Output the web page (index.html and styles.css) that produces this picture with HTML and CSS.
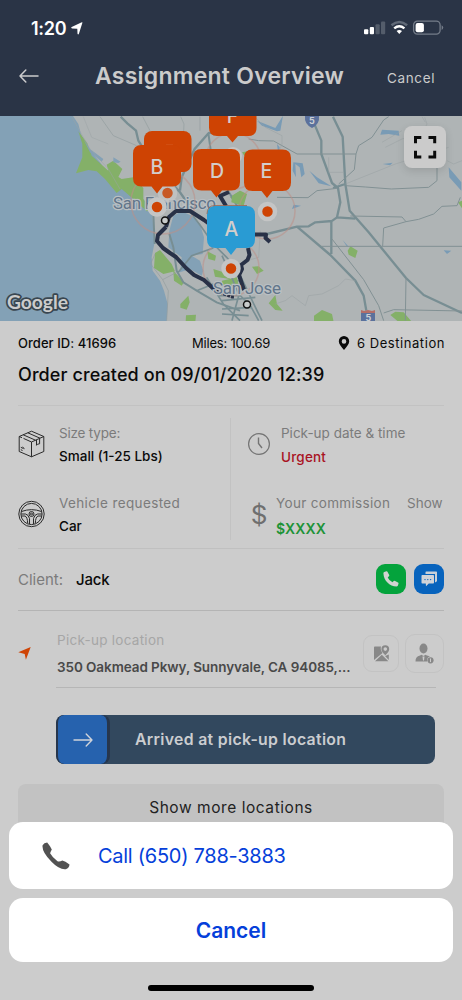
FILE: index.html
```html
<!DOCTYPE html>
<html lang="en">
<head>
<meta charset="utf-8">
<meta name="viewport" content="width=device-width, initial-scale=1">
<title>Assignment Overview</title>
<link rel="stylesheet" href="styles.css">
</head>
<body>
<div class="screen">
  <header class="header">
    <div class="status">
      <div class="clock-time"><span class="time">1:20</span>
        <svg width="12" height="13" viewBox="0 0 12 13"><path d="M11.400.8 7.900 11.800Q7.200 13 6.500 11.800L6.300 6.700 1 6.400Q-.4 5.900.7 5.100L10.200.400Q11.700-.1 11.400.8Z" fill="#fff"/></svg>
      </div>
      <svg class="signals" width="80" height="16" viewBox="0 0 80 16">
        <rect x="0" y="9.300" width="4.300" height="5" rx="1" fill="#fff"/><rect x="5.800" y="7" width="4.200" height="7.300" rx="1" fill="#fff"/>
        <rect x="11.500" y="4.300" width="4.200" height="10" rx="1" fill="#545d6b"/><rect x="17" y="1.500" width="4.200" height="12.800" rx="1" fill="#545d6b"/>
        <path d="M27.500 5.300Q35.300-1.400 43.100 5.300" fill="none" stroke="#616a78" stroke-width="2.500"/>
        <path d="M30.200 8.300Q35.300 4 40.400 8.300" fill="none" stroke="#fff" stroke-width="2.400"/>
        <path d="M32.600 11Q35.300 8.800 38 11L35.300 14Z" fill="#fff"/>
        <rect x="49.600" y="1.100" width="26.500" height="13" rx="3.800" fill="none" stroke="#747c89" stroke-width="1.300"/>
        <rect x="51.600" y="3" width="8.300" height="9.200" rx="2" fill="#fff"/><path d="M77.600 5.300q1.600.6 1.600 2.300t-1.600 2.300z" fill="#747c89"/>
      </svg>
    </div>
    <div class="nav">
      <svg width="20" height="14" viewBox="0 0 20 14" fill="none" stroke="#cbcbcd" stroke-width="1.500" stroke-linecap="round" stroke-linejoin="round"><path d="M19 7H1M6.800 1 1 7l5.800 6"/></svg>
      <h1 class="title">Assignment Overview</h1>
      <span class="nav-cancel">Cancel</span>
    </div>
  </header>

  <div class="map">
    <svg width="462" height="205" viewBox="0 116 462 205">
      <rect y="116" width="462" height="205" fill="#afb4b5"/>
      <g transform="translate(0 114) scale(.33333)">
        <path d="M0 0H215L235 30 243 60 265 105 300 145 330 190 380 225 420 250 450 285 457 300 463 390 455 430 458 470 480 500 492 530 503 570 500 625H0Z" fill="#83a1b6"/>
        <path d="M520 305 545 292 575 305 600 330 612 370 608 420 575 425 540 475 545 430 505 400 508 350Z M540 475 575 425 600 440 610 470 605 485 570 465Z" fill="#83a1b6"/>
        <path d="M235 52 262 88 275 125 325 170 365 195 400 190 430 222 430 255 455 285 440 292 400 255 365 225 350 237 315 195 290 172 265 168 228 178 247 130 247 90Z M320 152 340 140 367 165 355 189 325 170Z M465 417 480 408 515 450 525 472 490 480 462 462Z M520 470 552 505 545 515 522 500Z M541 570 565 545 569 565 560 587 541 581Z M558 604 588 602 586 624H557Z M622 412 648 425 645 440 625 435Z M640 465 680 478 690 495 645 488Z M690 250 720 230V275Z" fill="#84b068"/>
        <path d="M250 75 270 105 310 135 305 143 270 115ZM340 130 362 143 355 147 340 145Z" fill="#83a1b6"/>
        <g fill="none" stroke="#788e93" stroke-width="5">
          <path d="M362 8 382 28 408 50 415 80 440 120 480 170 540 235 575 285" stroke-width="7"/>
          <path d="M720 45 626 57 584 105 545 190 540 230" stroke-width="7"/>
          <path d="M625 57 635 130 660 190 720 290M460 300 464 390M508 360 520 400 530 470 550 505 590 530 650 565 720 590" stroke-width="6"/>
          <path d="M535 475 575 425 640 402M575 300 605 340 640 390 680 430 720 480M620 490 670 570 720 620M655 545H720M590 530 640 510 720 500"/>
          <path d="M300 8 340 65 410 95M428 8 450 50M542 8 552 30 550 75M465 420 452 450 488 497 530 475M488 497 505 530 500 620M600 8V50M640 120 600 190" stroke-width="2" stroke="#939d9f"/>
          <path d="M215 8 270 105 325 165 360 225M250 8 275 70 325 90" stroke-width="1.500" stroke="#9ca4a6"/>
        </g>
      </g>
      <g transform="translate(222 114) scale(.33333)">
        <path d="M105 20 160 42 183 5 175 50 165 52 120 35ZM165 90 173 100 170 130ZM214 145 242 148 248 180 238 190 233 160 220 150 222 190 212 170ZM262 170 285 190 328 217 290 208ZM475 62 480 47 530 50 532 65 500 60ZM680 160 718 205V230L682 190ZM482 150 512 146 504 154ZM210 285 215 272 237 275ZM665 409 688 410 675 420ZM362 378 380 398 374 397Z" fill="#799bb5"/>
        <path d="M30 245 55 230 75 240 65 275 28 265ZM90 458 110 457 125 470 105 480ZM140 568 160 543 165 570 182 590 160 588ZM276 605 300 588 330 600 335 624H276ZM377 410 385 397 407 410 400 432 380 422ZM505 603 520 593 545 595 570 624H530ZM708 265 720 260V283ZM60 115 76 112 70 130ZM0 500 45 490 50 515 0 520Z" fill="#84b068"/>
        <g fill="none" stroke="#788e93" stroke-width="7" stroke-linejoin="round">
          <path d="M268 8 298 80V120L330 207 348 222 355 265 345 310 328 322V420M333 8 362 68 370 210 383 290 440 355 552 492 605 543 720 597M333 222 370 210M345 310 400 314M135 360 225 338 260 337 280 325 330 321M225 338 325 423 400 500 425 545 433 590" />
          <path d="M0 425 25 480 50 540 85 575 110 620M55 485 105 590 120 620M0 560 100 550M0 585 90 580M0 600 80 605M60 510 35 600 30 620" stroke-width="5"/>
          <path d="M80 75 110 80 155 81 225 120H402M402 120 410 95 450 70 485 18 500 8M402 120 397 167 350 210M370 215 430 219 508 225 620 220 645 200V145M165 250 258 251 285 230 345 223M385 306 540 309 552 323 590 316 635 300 660 277 705 275 715 250M552 323 485 342 482 396M298 397H720M330 375 425 497 470 575 485 620M552 492 550 620M485 597 515 587 720 591" stroke-width="3" stroke="#829194"/>
          <path d="M100 10 130 40 180 65V90L165 130M608 10 615 30 600 60 540 75 490 100M370 210 520 150 680 100M540 50 480 85M675 140 695 150 720 140M320 130V175H365M600 8 610 25M115 350 110 430 75 440M160 570 190 560 210 545 250 575 260 545 300 540 350 515 370 495 400 500" stroke-width="1.500" stroke="#989fa1"/>
        </g>
      </g>
      <g class="place"><text x="113" y="209" textLength="103">San Francisco</text></g>
      <g fill="none" stroke="#bd9088" stroke-width="1.500" opacity=".55"><circle cx="163" cy="202" r="32"/><circle cx="267" cy="211" r="28"/><circle cx="231" cy="268" r="28"/><circle cx="233" cy="161" r="28"/></g>
      <path d="M166 227 169 217 176 211 190 211 204 220 216 229 234 240M166 227 158 235 157 241 163 248 170 253 176 257 186 268 194 275 204 280 216 291M229 192 220 196 226 206M255 234.500H266L265.500 238 270 242M248 248 249.500 255 247.500 260 241 265 242 269 239 275 244 290" fill="none" stroke="#283147" stroke-width="4" stroke-linejoin="round"/>
      <path d="M216 291 224 294 232 297H234" stroke="#283147" stroke-width="3" stroke-dasharray="3 1" fill="none"/>
      <g class="place"><text x="213" y="293.500" textLength="68">San Jose</text></g>
      <g stroke="#111" stroke-width="1.500" fill="#c8cbcb"><circle cx="165" cy="220.500" r="3.500"/><circle cx="247" cy="304.500" r="3.500"/></g>
      <g fill="#ce4303" stroke="#c4c5c5" stroke-width="4.500"><circle cx="167.500" cy="193" r="7.500" opacity=".8"/><circle cx="157" cy="207" r="7.500"/><circle cx="267.500" cy="211.500" r="7.500"/><circle cx="231" cy="268.500" r="7.500"/></g>
      <circle cx="233" cy="156" r="9" fill="#c4c5c5"/>
      <path d="M209 116H256.500V127.500Q256.500 136 248.500 136H238L232.500 142.500 227 136H217Q209 136 209 127.500V116Z" fill="#ce4303"/>
      <rect x="144" y="131" width="47.500" height="41" rx="8" fill="#ce4303"/><path d="M166 145.300h7" stroke="#e28a62" stroke-width=".8"/>
      <g fill="#ce4303">
        <path d="M141.500 145H172.500Q181 145 181 153.500V178Q181 186.500 172.500 186.500H162.500L157 193.500 151.500 186.500H141.500Q133 186.500 133 178V153.500Q133 145 141.500 145Z"/>
        <path d="M201.500 149H231.500Q240 149 240 157.500V182Q240 190.500 231.500 190.500H222L216.500 197.500 211 190.500H201.500Q193 190.500 193 182V157.500Q193 149 201.500 149Z"/>
        <path d="M252.500 149.500H282.500Q291 149.500 291 158V182.500Q291 191 282.500 191H272.500L267 198 261.500 191H252.500Q244 191 244 182.500V158Q244 149.500 252.500 149.500Z"/>
      </g>
      <path d="M215.500 206H246.500Q255 206 255 214.500V239.500Q255 248 246.500 248H236.500L231 255 225.500 248H215.500Q207 248 207 239.500V214.500Q207 206 215.500 206Z" fill="#299bd3"/>
      <path d="M207 214Q207 205.500 215 205.500H247" fill="none" stroke="#9a6650" stroke-width=".8"/>
      <g class="pin-label"><text x="232.500" y="122.500">F</text><text x="157" y="174">B</text><text x="217" y="178">D</text><text x="266.500" y="178">E</text><text x="231.500" y="235.500">A</text></g>
      <path d="M305 116Q304 124 312 128Q320 124 319 116Z" fill="#5b719c"/><text x="312" y="123.500" class="shield">5</text>
      <path d="M361 311H375V321H361Z" fill="#5b719c"/><path d="M361 310l3 1 4-1 4 1 3-1v3h-14z" fill="#b46e67"/><text x="368.500" y="321" class="shield">5</text>
      <text x="7" y="308.500" class="google" textLength="61" lengthAdjust="spacingAndGlyphs">Google</text>
    </svg>
    <div class="expand"><svg width="24" height="24" viewBox="0 0 24 24" fill="none" stroke="#0a0a0a" stroke-width="3"><path d="M2.500 8.300V2.500h5.800M15.500 2.500h6.200v5.800M21.700 15.700v6.200h-6.200M8.300 21.900H2.500v-6.200"/></svg></div>
  </div>

  <main class="content">
    <div class="meta"><span class="order-id">Order ID: 41696</span><span class="miles">Miles: 100.69</span>
      <span class="dest"><svg width="12" height="14" viewBox="0 0 12 14"><path fill-rule="evenodd" d="M6 0a5.200 5.200 0 0 1 5.200 5.200C11.200 8 8.500 11 6 14 3.500 11 .8 8 .8 5.200A5.200 5.200 0 0 1 6 0Zm0 3.100a2.300 2.300 0 1 0 0 4.600 2.300 2.300 0 0 0 0-4.600Z" fill="#0a0a0a"/></svg><span class="dest-text">6 Destination</span></span></div>
    <div class="created"><span>Order created on 09/01/2020 12:39</span></div>

    <section class="details">
      <div class="col">
        <div class="item">
          <svg class="ic" width="27" height="28" viewBox="0 0 27 28" fill="none" stroke="#2a2a2a" stroke-width="1" stroke-linejoin="round"><path d="M13.500 1.200 25.800 6.500V21.500L13.500 26.800 1.200 21.500V6.500ZM1.200 6.500 4 7.700M5.500 8.400 13.500 12 25.800 6.500M13.500 12V26.800M9.800 2.800 22 8.200M5.200 4.800 17.500 10.200M18.500 9.800V15.300L19.500 14.200 21.600 13.800V8.500M2.800 17.300 5.500 18.600M2.800 19.700 4.500 20.500M4.500 17 6.500 18.700"/></svg>
          <div class="pair"><span class="label l-size">Size type:</span><span class="value v-size">Small (1-25 Lbs)</span></div>
        </div>
        <div class="item">
          <svg class="ic" width="27" height="28" viewBox="0 0 27 28" fill="none" stroke="#2a2a2a" stroke-width="1"><circle cx="13.500" cy="14" r="12.700"/><circle cx="13.500" cy="14" r="10.600"/><circle cx="13.500" cy="14" r="2.500"/><circle cx="13.500" cy="14" r="1"/><path d="M3.500 11.500Q13.500 7.800 23.500 11.500M3.200 14H7.500Q10.500 14.500 11.500 18.500V24M23.800 14H19.500Q16.500 14.500 15.500 18.500V24M3.600 16H7Q9.500 17 9.700 23.500M23.400 16H20Q17.500 17 17.300 23.500"/></svg>
          <div class="pair"><span class="label l-veh">Vehicle requested</span><span class="value v-car">Car</span></div>
        </div>
      </div>
      <div class="col right">
        <div class="item">
          <svg class="ic" width="24" height="28" viewBox="0 0 24 28" fill="none" stroke="#747474" stroke-width="1.200"><circle cx="12" cy="14" r="10.400"/><path d="M11.500 7.500v6l3.500 4.500" stroke-width="1.400"/></svg>
          <div class="pair p-time"><span class="label l-time">Pick-up date &amp; time</span><span class="value v-urgent">Urgent</span></div>
        </div>
        <div class="item">
          <span class="dollar">$</span>
          <div class="pair p-com"><span class="label l-com">Your commission</span><span class="value v-com">$XXXX</span></div>
          <span class="label show">Show</span>
        </div>
      </div>
    </section>

    <section class="client"><span class="client-label">Client:</span><span class="client-name">Jack</span>
      <span class="btn call"><svg width="16" height="16" viewBox="0 0 16 16"><path d="M1.200.9 3.400.3Q4.200.1 4.600.9L6.200 3.900Q6.500 4.700 5.900 5.300L4.700 6.400Q6.200 9.600 9.500 11.300L10.700 10.100Q11.300 9.500 12.100 9.900L15 11.500Q15.800 12 15.500 12.700L14.800 14.800Q14.400 15.500 13.600 15.500C6.500 15.200.7 9.600.4 2.200Q.4 1.300 1.200.9Z" fill="#d0d3d0"/></svg></span>
      <span class="btn chat"><svg width="17" height="16" viewBox="0 0 17 16"><path d="M5.200.5H15.300Q16 .5 16 1.200V10.200L14 11.400V3H4.500V1.200Q4.500.5 5.200.5Z" fill="#c9d0d8"/><path d="M1.200 4H12.200Q13 4 13 4.800V11.800Q13 12.600 12.200 12.600H7.800L5 15.200 4.800 12.600H1.200Q.5 12.600.5 11.800V4.800Q.5 4 1.200 4Z" fill="#d0d3d8"/><g fill="#0763bd"><circle cx="4" cy="8.600" r=".7"/><circle cx="6.800" cy="8.600" r=".7"/><circle cx="9.600" cy="8.600" r=".7"/></g></svg></span>
    </section>

    <section class="pickup">
      <svg class="nav-arrow" width="13" height="13" viewBox="0 0 13 13"><path d="M12.700 0 7.900 12.800 6.700 7 .3 5.300Z" fill="#cf4405"/></svg>
      <div class="pickup-body">
        <div class="pickup-text"><span class="pl">Pick-up location</span><span class="addr">350 Oakmead Pkwy, Sunnyvale, CA 94085,...</span></div>
        <div class="tiles">
          <span class="tile small"><svg width="17" height="17" viewBox="0 0 17 17"><path d="M1.800 1.500H8Q7 4.500 9.500 8L1 15V2.500Q1 1.500 1.800 1.500ZM2 16.300 8.800 9.800 15.400 16.300ZM10.400 9.200 12.200 11 15.800 9.500V15Z" fill="#888"/><path fill-rule="evenodd" d="M12.300.3a3.900 3.900 0 0 1 3.900 3.900q0 2.500-3.900 6-3.900-3.500-3.900-6A3.900 3.900 0 0 1 12.300.3Zm0 2a1.800 1.800 0 1 0 0 3.600 1.800 1.800 0 0 0 0-3.600Z" fill="#888"/></svg></span>
          <span class="tile big"><svg width="19" height="21" viewBox="0 0 19 21"><ellipse cx="8.500" cy="5.500" rx="4" ry="5" fill="#888"/><path d="M.5 18.500Q.3 13.500 5 12.600L6.500 11.800 8.500 13 10.500 11.800 12 12.600Q14 12.900 15 13.500 11.800 14 12 18.500Z" fill="#888"/><path d="M7.500 13.500h2l-.5 4h-1z" fill="#ccc"/><circle cx="15.500" cy="17.300" r="3.100" fill="#888"/><path d="M15.500 15.500v3.600" stroke="#ccc"/></svg></span>
        </div>
      </div>
    </section>

    <div class="slide"><span class="knob"><svg width="20" height="14" viewBox="0 0 20 14" fill="none" stroke="#cfd3da" stroke-width="1.400" stroke-linecap="round" stroke-linejoin="round"><path d="M1 7H19M13.200 1 19 7l-5.800 6"/></svg></span><span class="slide-text">Arrived at pick-up location</span></div>
    <div class="more"><span>Show more locations</span></div>
  </main>

  <div class="sheet">
    <div class="card call-card"><svg width="28" height="28" viewBox="0 0 28 28"><path d="M.6 3.200Q2 .8 5.200.5L8 4.200 9.800 7.500Q8.600 9.500 8.100 11.200Q10.500 15.500 15.500 19.300Q17.500 20.200 20.300 18.500L23.500 19.700 27.500 22.500Q27.200 26.300 23.800 27.200Q17.500 28 9.500 19.800Q-.5 9.700.6 3.200Z" fill="#525252"/></svg><span class="call-text">Call (650) 788-3883</span></div>
    <div class="card cancel-card"><span>Cancel</span></div>
    <div class="home"></div>
  </div>
</div>
</body>
</html>
```
FILE: styles.css
```css
* { box-sizing: border-box; }
body { margin: 0; font-family: Inter, "Liberation Sans", sans-serif; }
svg { display: block; flex: none; }
.screen { position: relative; width: 462px; height: 1000px; overflow: hidden; background: #ccc; color: #0a0a0a; white-space: nowrap; }
.header { height: 116px; background: #2a3446; }
.status { height: 56px; padding: 0 18px 0 31px; display: flex; justify-content: space-between; align-items: center; }
.clock-time { display: flex; align-items: center; gap: 5px; color: #fff; }
.time { font-size: 18px; font-weight: 600; letter-spacing: -.25px; }
.nav { height: 40px; padding: 0 19px; display: flex; align-items: center; }
.title { margin: 0 0 0 56px; width: 292px; font-size: 23px; line-height: 40px; font-weight: 600; letter-spacing: .24px; color: #cbcbcb; }
.nav-cancel { font-size: 13.500px; color: #cbcbcb; padding-top: 3px; letter-spacing: .65px; }
.map { position: relative; height: 205px; }
.place { font: 400 17px Roboto, sans-serif; fill: #61758a; stroke: #b9bfc2; stroke-width: 2.500px; paint-order: stroke; }
.pin-label { font: 500 19.500px Inter, sans-serif; fill: #d3cecb; text-anchor: middle; }
.shield { font: 700 9px Inter, sans-serif; fill: #ccd0d5; text-anchor: middle; }
.google { font: 500 19.500px Lato, sans-serif; fill: #ccc; stroke: #394650; stroke-width: 3.500px; stroke-linejoin: round; paint-order: stroke; font-weight: 700; }
.expand { position: absolute; left: 404px; top: 10px; width: 42px; height: 42px; border-radius: 8px; background: #cbcbcb; display: grid; place-items: center; box-shadow: 0 3px 8px rgba(0,0,0,.12); }
.content { padding: 0 18px; }
.meta { height: 40px; padding-top: 12px; line-height: 20px; display: flex; font-size: 13px; }
.order-id { width: 174px; font-weight: 500; letter-spacing: .05px; }
.miles { flex: 1; letter-spacing: -.2px; }
.dest { display: flex; align-items: center; height: 20px; gap: 7px; margin-right: -1px; }
.dest-text { letter-spacing: .56px; }
.created { height: 45px; border-bottom: 1px solid #c2c2c2; font-size: 18px; line-height: 27px; font-weight: 500; letter-spacing: .1px; }
.details { height: 143px; display: grid; grid-template-columns: 212px 214px; border-bottom: 1px solid #c0c0c0; padding: 12px 0 8px; }
.col { display: flex; flex-direction: column; gap: 26px; padding-top: 4px; }
.right { border-left: 1px solid #c2c2c2; padding-left: 16px; }
.item { display: flex; height: 44px; }
.ic { margin-top: 8px; }
.pair { display: flex; flex-direction: column; padding-left: 14px; }
.label, .value { font-size: 13.500px; line-height: 23px; height: 23px; }
.label { color: #7b7b7b; }
.l-size { letter-spacing: -.2px; }
.l-veh { letter-spacing: .38px; }
.l-com { letter-spacing: .33px; }
.value { font-weight: 500; }
.p-time { padding-left: 10px; }
.v-urgent { color: #a91223; padding-top: 1px; letter-spacing: .2px; }
.dollar { width: 24px; padding-top: 9px; font-size: 26px; line-height: 28px; text-align: center; color: #6f6f6f; }
.p-com { padding-left: 5px; width: 136px; }
.v-com { color: #1d9337; font-weight: 600; font-size: 14px; padding-top: 2px; letter-spacing: .15px; }
.client { height: 62px; padding-bottom: 1px; display: flex; align-items: center; border-bottom: 1px solid #b4b4b4; font-size: 15px; }
.client-label { width: 58px; color: #7b7b7b; }
.client-name { flex: 1; font-weight: 500; letter-spacing: -.2px; }
.btn { width: 30px; height: 30px; border-radius: 9px; display: grid; place-items: center; }
.call { background: #04a33c; }
.chat { background: #0763bd; margin-left: 8px; }
.pickup { height: 77px; display: flex; }
.nav-arrow { margin: 36px 25px 0 0; }
.pickup-body { width: 380px; flex: none; height: 77px; border-bottom: 1px solid #b6b6b6; display: flex; }
.pickup-text { width: 307px; flex: none; padding: 16px 0 0 1px; display: flex; flex-direction: column; line-height: 27px; }
.pl { color: #a6a6a6; font-size: 13.500px; letter-spacing: .27px; }
.addr { color: #494949; font-weight: 600; font-size: 13.500px; letter-spacing: -.08px; }
.tiles { display: flex; align-items: center; gap: 6px; height: 40px; margin-top: 22px; flex: none; }
.tile { border: 1px solid #c3c3c3; display: grid; place-items: center; flex: none; }
.small { width: 36px; height: 37px; border-radius: 9px; }
.big { width: 39px; height: 39px; border-radius: 10px; }
.slide { width: 379px; height: 49px; margin: 27px 0 0 38px; border-radius: 8px; background: #32485e; display: flex; align-items: center; overflow: hidden; }
.knob { width: 53px; height: 49px; background: #2662ae; border: solid #27364c; border-width: 0 2px; border-radius: 8px; display: grid; place-items: center; box-shadow: 1px 0 #27364c; }
.slide-text { margin-left: 26px; font-size: 15.800px; font-weight: 600; color: #cbcdd0; letter-spacing: .32px; }
.more { height: 80px; margin-top: 20px; border-radius: 8px; background: #c2c2c2; text-align: center; line-height: 48px; font-size: 15.500px; letter-spacing: .55px; color: #222; }
.sheet { position: absolute; left: 9px; right: 9px; top: 822px; display: flex; flex-direction: column; gap: 9px; }
.card { background: #fff; border-radius: 14px; color: #053fda; }
.call-card { height: 67px; display: flex; align-items: center; padding-left: 33px; gap: 28px; font-size: 20px; letter-spacing: -.27px; }
.cancel-card { height: 64px; line-height: 65px; text-align: center; font-size: 21px; font-weight: 600; }
.home { align-self: center; width: 166px; height: 6px; margin-top: 14px; border-radius: 3px; background: #000; }
```
